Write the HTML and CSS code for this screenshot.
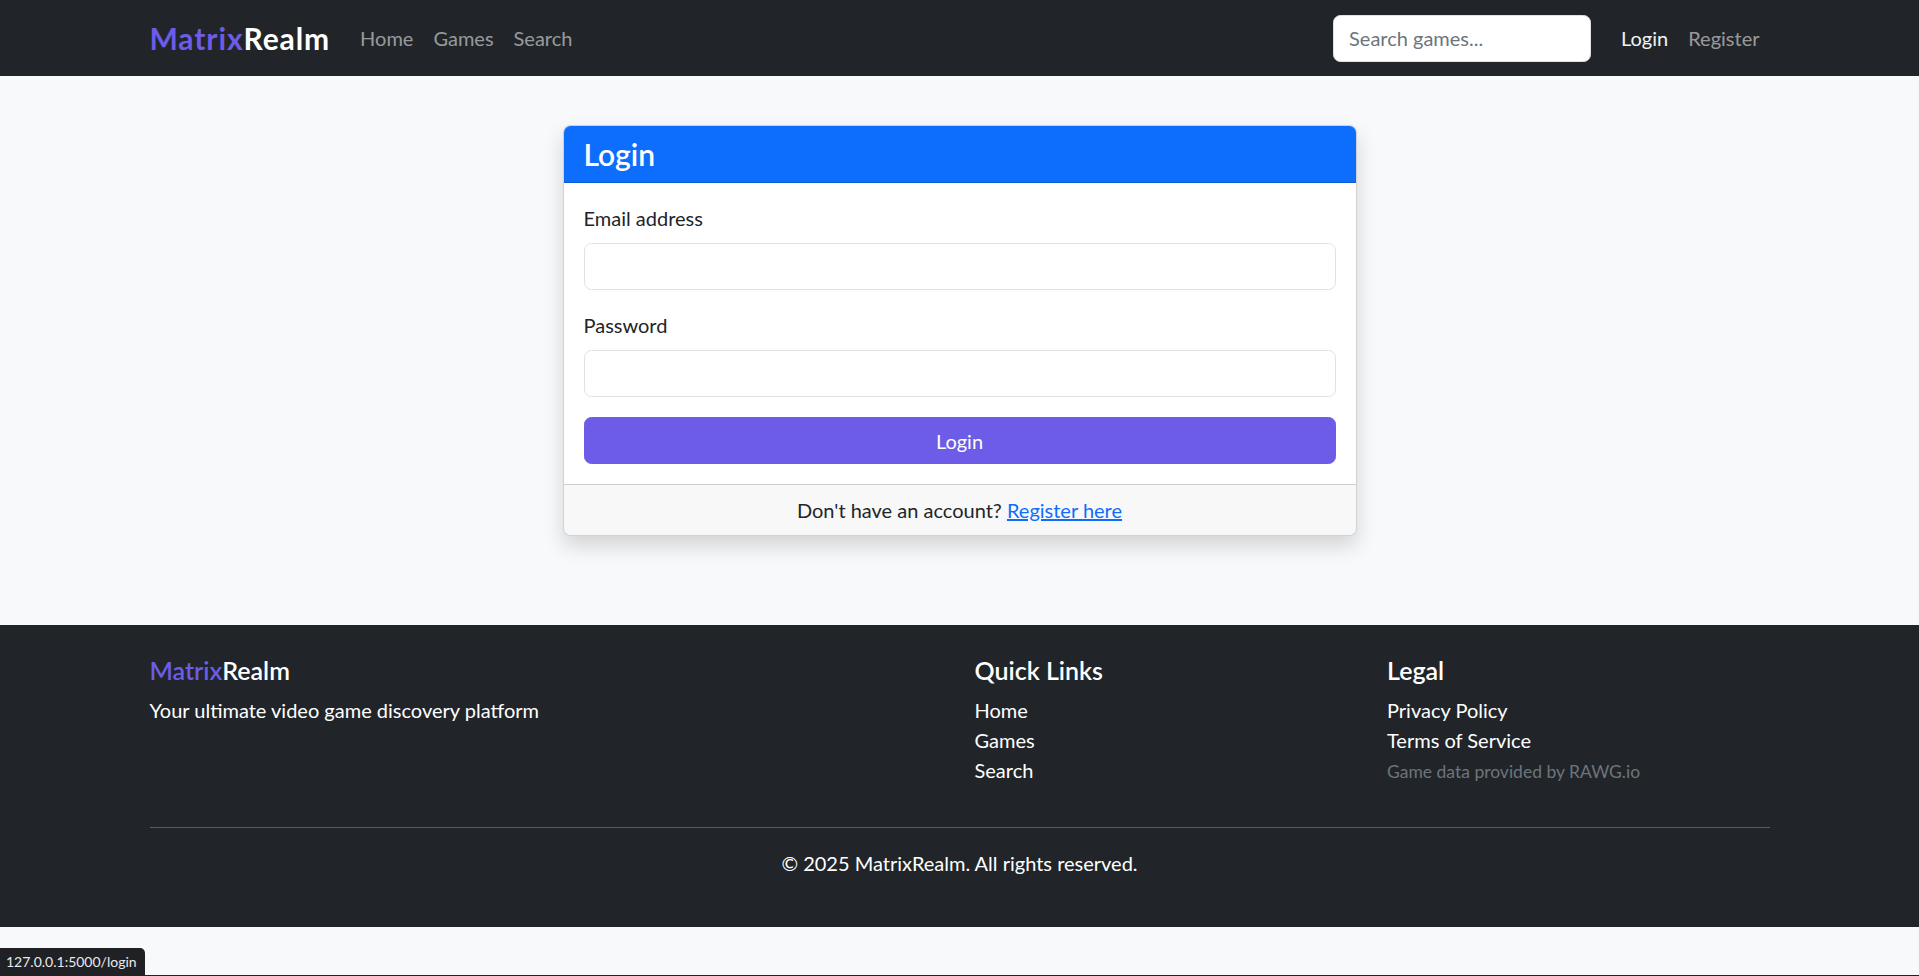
FILE: index.html
```html
<!DOCTYPE html>
<html lang="en">
<head>
<meta charset="utf-8">
<title>Login - MatrixRealm</title>
<link rel="stylesheet" href="styles.css">
</head>
<body>
<nav class="navbar">
  <div class="container nav-inner">
    <a class="brand" href="#"><span class="accent">Matrix</span>Realm</a>
    <ul class="nav-links">
      <li><a class="nav-link" href="#">Home</a></li>
      <li><a class="nav-link" href="#">Games</a></li>
      <li><a class="nav-link" href="#">Search</a></li>
    </ul>
    <form class="nav-search">
      <input class="search-input" type="search" placeholder="Search games...">
    </form>
    <ul class="nav-links">
      <li><a class="nav-link active" href="#">Login</a></li>
      <li><a class="nav-link" href="#">Register</a></li>
    </ul>
  </div>
</nav>

<main class="main">
  <div class="card">
    <div class="card-header"><h4 class="card-title">Login</h4></div>
    <div class="card-body">
      <form>
        <div class="field">
          <label class="label" for="email">Email address</label>
          <input class="input" id="email" type="email">
        </div>
        <div class="field">
          <label class="label" for="password">Password</label>
          <input class="input" id="password" type="password">
        </div>
        <button class="btn" type="button">Login</button>
      </form>
    </div>
    <div class="card-footer">Don't have an account? <a class="link" href="#">Register here</a></div>
  </div>
</main>

<footer class="footer">
  <div class="container">
    <div class="row">
      <div class="col col-half">
        <h5 class="f-title"><span class="accent">Matrix</span>Realm</h5>
        <p class="f-text">Your ultimate video game discovery platform</p>
      </div>
      <div class="col col-quarter">
        <h5 class="f-title">Quick Links</h5>
        <ul class="f-list">
          <li><a href="#">Home</a></li>
          <li><a href="#">Games</a></li>
          <li><a href="#">Search</a></li>
        </ul>
      </div>
      <div class="col col-quarter">
        <h5 class="f-title">Legal</h5>
        <ul class="f-list">
          <li><a href="#">Privacy Policy</a></li>
          <li><a href="#">Terms of Service</a></li>
          <li><small class="muted">Game data provided by RAWG.io</small></li>
        </ul>
      </div>
    </div>
    <hr class="rule">
    <p class="copyright">© 2025 MatrixRealm. All rights reserved.</p>
  </div>
</footer>

<div class="status">127.0.0.1:5000/login</div>
</body>
</html>
```
FILE: styles.css
```css
* { box-sizing: border-box; }
html, body { margin: 0; padding: 0; }
body {
  background: #f8f9fa;
  color: #212529;
  font-family: "Lato", "Liberation Sans", sans-serif;
  font-size: 20px;
  line-height: 30px;
  min-height: 976px;
}
a { text-decoration: none; }
.container { width: 1620px; margin: 0 auto; }
.accent { color: #6c5ce7; }

/* navbar */
.navbar { background: #212529; height: 76px; }
.nav-inner { display: flex; align-items: center; height: 100%; }
.brand {
  color: #fff;
  font-size: 30px;
  line-height: 45px;
  font-weight: 700;
  letter-spacing: 0.9px;
  margin-right: 20px;
}
.nav-links { display: flex; list-style: none; margin: 0; padding: 0; }
.nav-link { display: block; padding: 0 10px; color: rgba(255,255,255,0.55); line-height: 30px; }
.nav-link.active { color: #f2f2f2; }
.nav-search { margin-left: auto; margin-right: 20px; }
.search-input {
  width: 258px;
  height: 47px;
  border: 1px solid #dee2e6;
  border-radius: 7.5px;
  padding: 0 15px;
  font: inherit;
  color: #212529;
  background: #fff;
  display: block;
}
.search-input::placeholder { color: #6c757d; }

/* main */
.main { padding: 49px 0 89px; }
.card {
  width: 794px;
  margin: 0 auto;
  background: #fff;
  border: 1px solid rgba(0,0,0,0.175);
  border-radius: 7.5px;
  box-shadow: 0 10px 20px rgba(0,0,0,0.15);
  overflow: hidden;
}
.card-header {
  background: #0d6efd;
  padding: 10px 20px;
  border-bottom: 1px solid rgba(0,0,0,0.175);
}
.card-title { margin: 0; color: #fff; font-size: 30px; line-height: 36px; font-weight: 600; }
.card-body { padding: 20px; }
.field { margin-bottom: 20px; }
.label { display: block; margin-bottom: 10px; }
.input {
  display: block;
  width: 100%;
  height: 47px;
  border: 1px solid #dee2e6;
  border-radius: 7.5px;
  padding: 0 15px;
  font: inherit;
  background: #fff;
}
.btn {
  display: block;
  width: 100%;
  height: 47px;
  border: 1px solid #6c5ce7;
  border-radius: 7.5px;
  background: #6c5ce7;
  color: #fff;
  font: inherit;
  cursor: pointer;
}
.card-footer {
  background: rgba(33,37,41,0.03);
  border-top: 1px solid rgba(0,0,0,0.175);
  padding: 10px 20px;
  text-align: center;
}
.link { color: #0d6efd; text-decoration: underline; }

/* footer */
.footer { background: #212529; color: #fff; padding: 30px 0; }
.row { display: flex; margin: 0 -15px; }
.col { padding: 0 15px; }
.col-half { width: 50%; }
.col-quarter { width: 25%; }
.f-title { margin: 0 0 10px; font-size: 25px; line-height: 30px; font-weight: 600; }
.f-text { margin: 0 0 20px; }
.f-list { list-style: none; margin: 0 0 20px; padding: 0; }
.f-list a { color: #fff; }
.muted { font-size: 17.5px; color: #6c757d; }
.rule { margin: 20px 0; border: 0; border-top: 1px solid rgba(255,255,255,0.25); height: 0; }
.copyright { margin: 0 0 19px; text-align: center; }

/* browser status bubble */
.status {
  position: fixed;
  left: 0;
  bottom: 0;
  height: 28px;
  padding: 0 8px 0 6px;
  background: #202124;
  color: #e8eaed;
  font-size: 14px;
  line-height: 28px;
  border-top-right-radius: 5px;
}
body::after {
  content: "";
  position: fixed;
  left: 0; right: 0; bottom: 0;
  height: 1px;
  background: #202124;
}
```
